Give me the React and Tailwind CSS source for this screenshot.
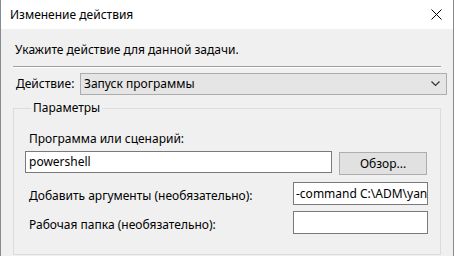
import React from 'react';

export default function App() {
  return (
    <div className="w-[454px] h-[256px] overflow-hidden bg-[#f0f0f0] border-x border-[#8a8a8a] text-[12px] leading-[16px] text-black font-['Noto_Sans',sans-serif]">
      <div className="h-[29px] bg-white flex items-center justify-between pl-[9px] pr-[10px]">
        <span>Изменение действия</span>
        <svg width="11" height="11" viewBox="0 0 11 11" className="mr-[1px]">
          <path d="M0.5 0.5 L10.5 10.5 M10.5 0.5 L0.5 10.5" stroke="#000" strokeWidth="1" />
        </svg>
      </div>

      <div className="px-[12px]">
        <div className="mt-[13px] ml-[2px]">Укажите действие для данной задачи.</div>
        <div className="mt-[8px] border-t border-[#a0a0a0] border-b border-b-white" />

        <div className="mt-[5px] flex items-center">
          <span className="ml-[3px] w-[64px] shrink-0">Действие:</span>
          <div className="w-[367px] h-[22px] shrink-0 bg-[#e5e5e5] border border-[#adadad] flex items-center justify-between pl-[3px] pr-[6px]">
            <span>Запуск программы</span>
            <svg width="9" height="6" viewBox="0 0 9 6">
              <path d="M0.5 0.5 L4.5 4.5 L8.5 0.5" stroke="#333" strokeWidth="1.2" fill="none" />
            </svg>
          </div>
        </div>

        <fieldset className="mt-[5px] border border-[#dcdcdc] pl-[11px] pb-[20px]">
          <legend className="ml-[6px] px-[2px]">Параметры</legend>

          <div className="mt-[15px] ml-[4px]">Программа или сценарий:</div>
          <div className="mt-[4px] flex items-start">
            <div className="w-[307px] h-[22px] shrink-0 bg-white border border-[#7a7a7a] pl-[3px] flex items-center">powershell</div>
            <button className="ml-[7px] mt-[1px] w-[88px] h-[23px] shrink-0 bg-[#e1e1e1] border border-[#adadad]">Обзор...</button>
          </div>

          <div className="mt-[7px] flex items-start">
            <span className="ml-[4px] w-[264px] shrink-0 mt-[6px]">Добавить аргументы (необязательно):</span>
            <div className="w-[135px] h-[23px] shrink-0 bg-white border border-[#7a7a7a] pl-[2px] flex items-center overflow-hidden whitespace-nowrap">-command C:\ADM\yandex.ps1</div>
          </div>

          <div className="mt-[6px] flex items-start">
            <span className="ml-[4px] w-[264px] shrink-0 mt-[6px]">Рабочая папка (необязательно):</span>
            <div className="w-[135px] h-[23px] shrink-0 bg-white border border-[#7a7a7a]" />
          </div>
        </fieldset>
      </div>
    </div>
  );
}
